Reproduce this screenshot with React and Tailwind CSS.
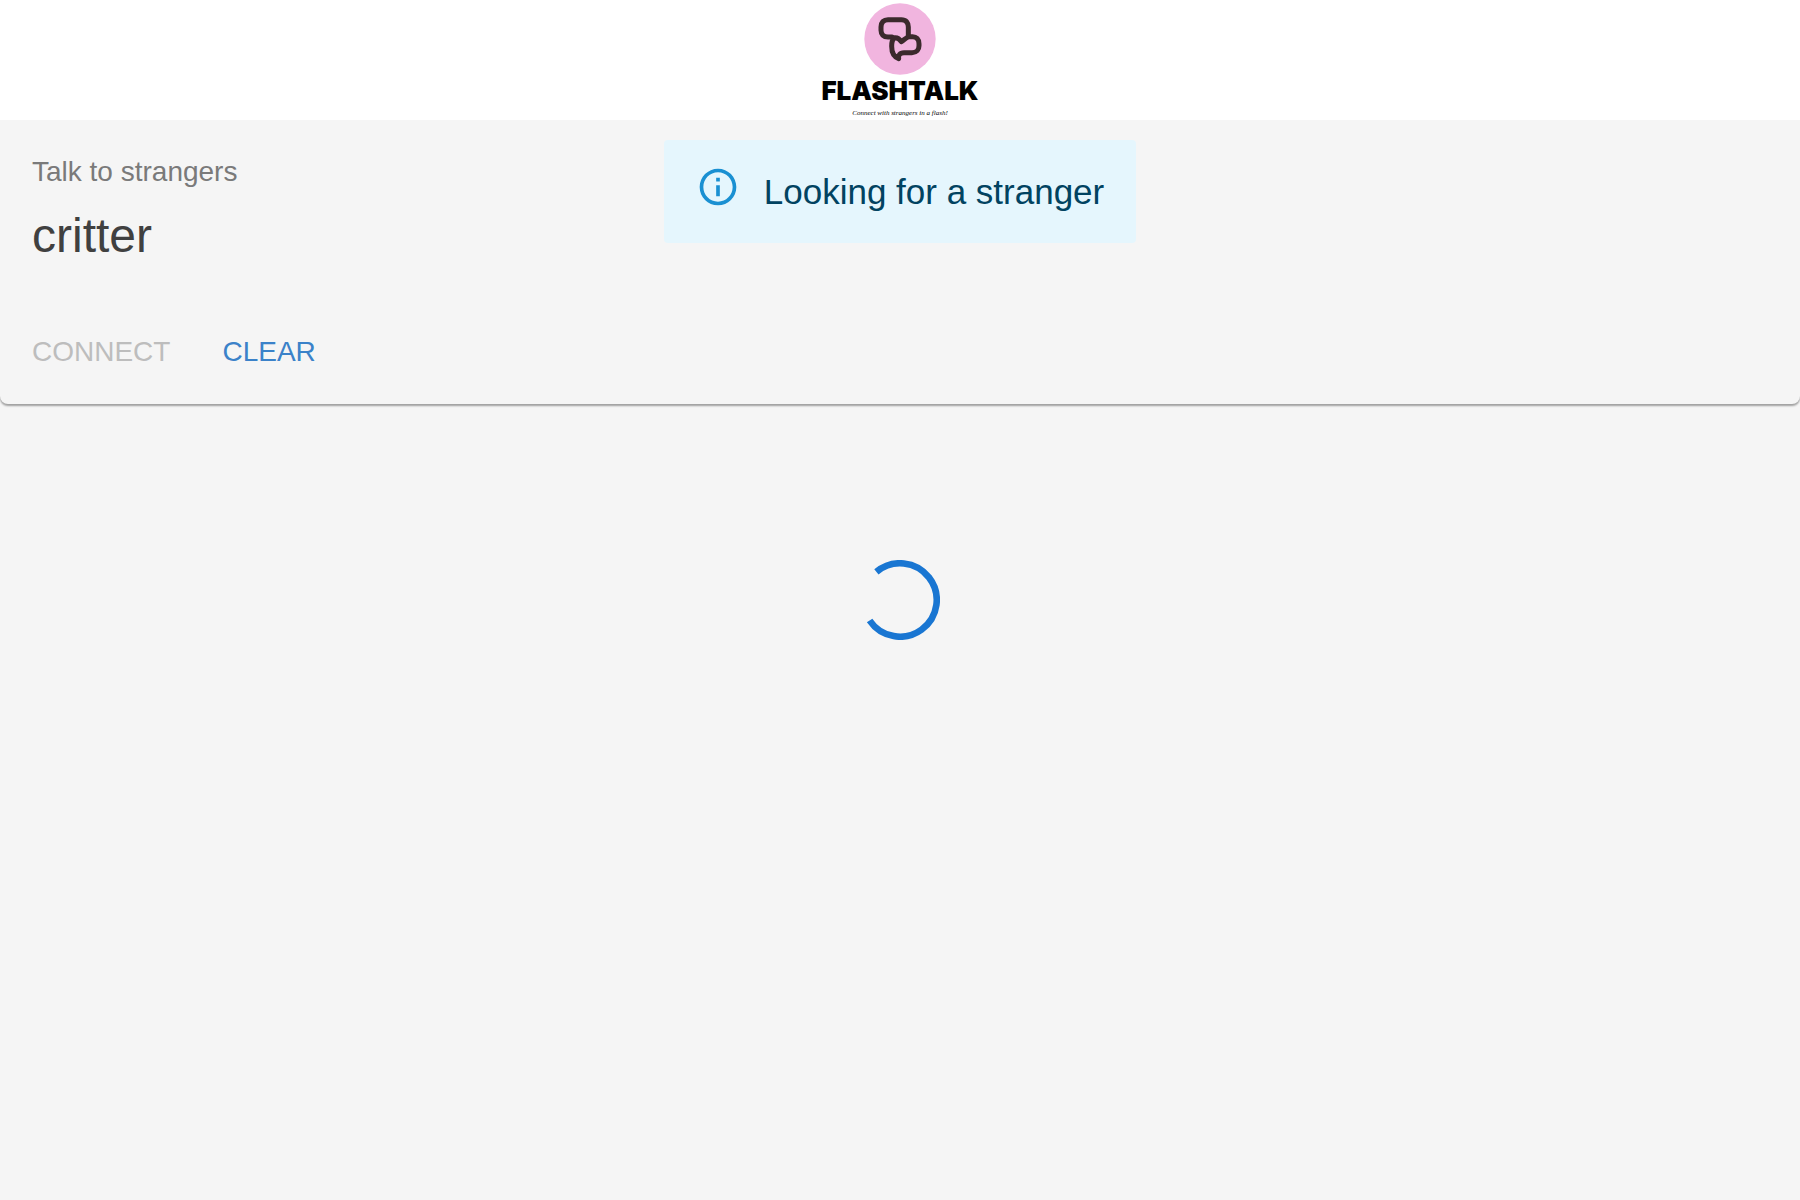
import React, { useState } from 'react';

const LogoMark = () => (
  <svg viewBox="0 0 216 216" className="h-[72px] w-[72px]" aria-hidden="true">
    <circle cx="108" cy="108" r="107" fill="#f1b5df" />
    <g fill="none" stroke="#3b2a2c" strokeWidth="15" strokeLinejoin="round" strokeLinecap="round">
      <path d="M84 102 H72 C58 102 51 94 51 82 V72 C51 58 59 50 72 50 H112 C126 50 133 59 133 72 V100" />
      <path d="M112 116 C107 108 102 103 92 104 C86 108 83 118 83 130 C83 148 90 162 104 167 C102 158 107 149 120 149 H144 C158 149 165 140 165 128 V122 C165 108 157 101 146 101 H136 C127 103 121 110 112 116 Z" />
    </g>
  </svg>
);

const Header = () => (
  <header className="flex h-[120px] flex-col items-center bg-white pt-[3px]">
    <LogoMark />
    <div className="font-['Inter',sans-serif] text-[26px] leading-8 font-black text-black">FLASHTALK</div>
    <p className="font-['Liberation_Serif',serif] text-[7px] leading-3 text-black italic">
      Connect with strangers in a flash!
    </p>
  </header>
);

const Alert = ({ children }) => (
  <div role="alert" className="flex h-[103px] items-start rounded bg-[#e5f6fd] px-8 text-[#014361]">
    <svg viewBox="0 0 24 24" className="mt-[25px] mr-6 h-11 w-11 fill-[#1a90d2]" aria-hidden="true">
      <path d="M11 7h2v2h-2zm0 4h2v6h-2zm1-9C6.48 2 2 6.48 2 12s4.48 10 10 10 10-4.48 10-10S17.52 2 12 2zm0 18c-4.41 0-8-3.59-8-8s3.59-8 8-8 8 3.59 8 8-3.59 8-8 8z" />
    </svg>
    <div className="mt-7 text-[35px] leading-12">{children}</div>
  </div>
);

const Spinner = () => (
  <svg viewBox="0 0 80 80" className="h-20 w-20" role="progressbar" aria-label="Loading">
    <path d="M16.4 11.9 A36.7 36.7 0 1 1 9.6 60.5" fill="none" stroke="#1976d2" strokeWidth="6.6" />
  </svg>
);

const App = () => {
  const [searching, setSearching] = useState(true);

  return (
    <div className="min-h-screen bg-[#f5f5f5] font-['Liberation_Sans',Arial,sans-serif]">
      <Header />

      <main>
        {/* Search card */}
        <section className="rounded-b-lg px-8 pb-7 shadow-[0_2px_2px_rgba(0,0,0,0.35)]">
          <div className="grid h-[188px] grid-cols-[1fr_auto_1fr] items-start pt-5">
            <div className="pt-3">
              <p className="text-[28px] leading-10 text-[#7a7a7a]">Talk to strangers</p>
              <h1 className="mt-3 text-5xl leading-16 text-[#404040]">critter</h1>
            </div>
            {searching && <Alert>Looking for a stranger</Alert>}
          </div>

          {/* Actions */}
          <div className="flex gap-13 pt-5">
            <button
              type="button"
              disabled={searching}
              onClick={() => setSearching(true)}
              className="text-[28px] leading-12 text-[#1976d2] disabled:text-[#bdbdbd]"
            >
              CONNECT
            </button>
            <button
              type="button"
              onClick={() => setSearching(false)}
              className="text-[28px] leading-12 text-[#3b82c9]"
            >
              CLEAR
            </button>
          </div>
        </section>

        {searching && (
          <div className="flex justify-center pt-39">
            <Spinner />
          </div>
        )}
      </main>
    </div>
  );
};

export default App;
